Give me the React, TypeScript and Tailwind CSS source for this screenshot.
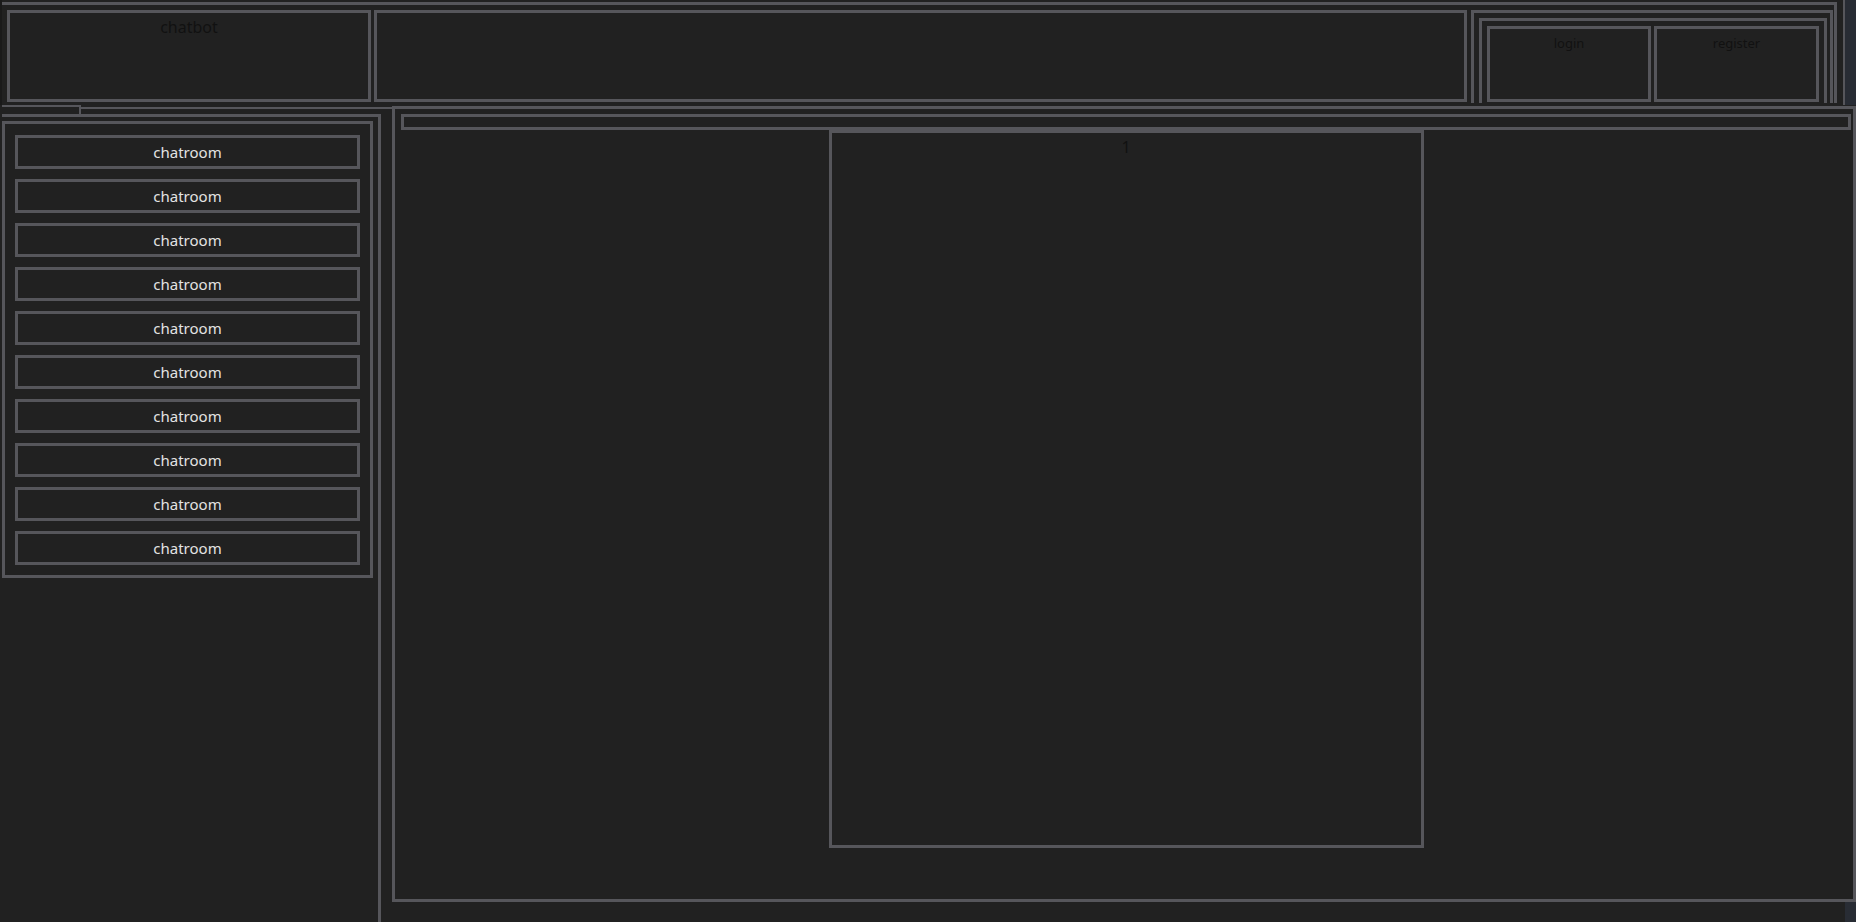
import React from "react";

export default function App() {
  const rooms = Array.from({ length: 10 }, (_, i) => i);
  return (
    <div className="w-[1856px] h-[922px] overflow-hidden bg-[#212121] flex flex-col font-['Noto_Sans','DejaVu_Sans',sans-serif]">
      {/* header */}
      <header className="flex h-[105px] shrink-0">
        <div className="w-[2px] bg-[#1a1a1a]" />
        <div className="mt-[2px] w-[1835px] h-[101px] border-t-[3px] border-r-[3px] border-[#56565b] flex items-start pl-[5px] pr-[1px] pt-[5px]">
          <div className="w-[364px] h-[92px] border-[3px] border-[#56565b] text-center pt-[2px] text-[16px] leading-[24px] text-[#111111]">
            chatbot
          </div>
          <div className="ml-[3px] w-[1093px] h-[92px] border-[3px] border-[#56565b]" />
          <div className="ml-[4px] w-[362px] h-[93px] border-t-[3px] border-x-[3px] border-[#56565b] pl-[5px] pr-[3px] pt-[5px]">
            <div className="w-[348px] h-[85px] border-t-[3px] border-x-[3px] border-[#56565b] flex items-start pl-[5px] pr-[5px] pt-[5px] gap-[3px]">
              <div className="w-[164px] h-[76px] border-[3px] border-[#56565b] text-center pt-[4px] text-[13px] leading-[20px] text-[#111111]">
                login
              </div>
              <div className="w-[165px] h-[76px] border-[3px] border-[#56565b] text-center pt-[4px] text-[13px] leading-[20px] text-[#111111]">
                register
              </div>
            </div>
          </div>
        </div>
        <div className="w-[6px]" />
        <div className="w-[2px] bg-[#56565b]" />
        <div className="flex-1 bg-[#282c34]" />
      </header>

      {/* body */}
      <div className="flex h-[817px]">
        <div className="w-[392px] flex flex-col">
          <div className="flex h-[9px] shrink-0">
            <div className="ml-[2px] w-[79px] h-[9px] border-t-[2px] border-r-[2px] border-[#56565b]" />
            <div className="flex-1 mt-[2px] border-t-[2px] border-[#56565b]" />
          </div>
          <aside className="ml-[2px] w-[379px] flex-1 border-t-[3px] border-r-[3px] border-[#56565b] pt-[4px]">
            <nav className="w-[371px] border-[3px] border-[#56565b] pt-[11px] px-[10px] pb-[10px] flex flex-col gap-[10px]">
              {rooms.map((i) => (
                <div
                  key={i}
                  className="h-[34px] border-[3px] border-[#56565b] flex items-center justify-center text-[15px] leading-[28px] text-[#e3e3e3]"
                >
                  chatroom
                </div>
              ))}
            </nav>
          </aside>
        </div>

        <div className="w-[1464px] flex flex-col">
          <main className="mt-[1px] h-[796px] shrink-0 border-[3px] border-[#56565b] bg-[#212121] flex flex-col pl-[6px] pr-[2px] pt-[5px]">
            <div className="h-[16px] shrink-0 border-[3px] border-[#56565b]" />
            <div className="flex justify-center">
              <div className="w-[595px] h-[718px] border-[3px] border-[#56565b] text-center pt-[2px] text-[16px] leading-[24px] text-[#111111]">
                1
              </div>
            </div>
          </main>
          <div className="flex-1 flex">
            <div className="flex-1" />
            <div className="w-[11px] bg-[#282c34]" />
          </div>
        </div>
      </div>
    </div>
  );
}
